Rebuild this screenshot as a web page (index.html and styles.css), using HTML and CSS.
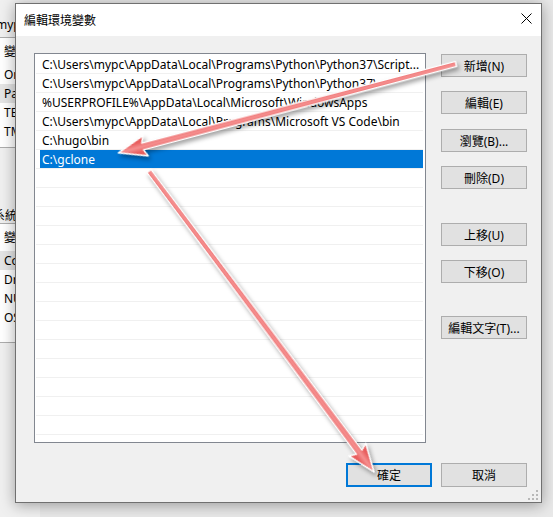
FILE: index.html
```html
<!DOCTYPE html>
<html lang="zh-Hant">
<head>
    <meta charset="UTF-8">
    <meta name="viewport" content="width=device-width, initial-scale=1.0">
    <title>編輯環境變數</title>
    <link rel="stylesheet" href="styles.css">
</head>
<body>
    <div class="desktop">
        <!-- system properties window behind the dialog -->
        <div class="behind">
            <div class="behind-title">mypc</div>
            <div class="behind-list user-vars">
                <div class="behind-head">變數</div>
                <div class="behind-row">OneDrive</div>
                <div class="behind-row sel">Path</div>
                <div class="behind-row">TEMP</div>
                <div class="behind-row">TMP</div>
            </div>
            <div class="behind-label">系統變數</div>
            <div class="behind-list sys-vars">
                <div class="behind-head">變數</div>
                <div class="behind-row sel">ComSpec</div>
                <div class="behind-row">DriverData</div>
                <div class="behind-row">NUMBER_OF_PROCESSORS</div>
                <div class="behind-row">OS</div>
            </div>
        </div>

        <div class="dialog">
            <div class="titlebar">
                <span class="title">編輯環境變數</span>
                <svg class="close" width="11" height="11" viewBox="0 0 11 11">
                    <path d="M0.5 0.5 L10.5 10.5 M10.5 0.5 L0.5 10.5" stroke="#000" stroke-width="1"/>
                </svg>
            </div>

            <div class="dialog-body">
                <div class="main">
                    <div class="pathlist">
                        <div class="row">C:\Users\mypc\AppData\Local\Programs\Python\Python37\Script...</div>
                        <div class="row">C:\Users\mypc\AppData\Local\Programs\Python\Python37\</div>
                        <div class="row">%USERPROFILE%\AppData\Local\Microsoft\WindowsApps</div>
                        <div class="row">C:\Users\mypc\AppData\Local\Programs\Microsoft VS Code\bin</div>
                        <div class="row">C:\hugo\bin</div>
                        <div class="row sel">C:\gclone</div>
                        <div class="row"></div>
                        <div class="row"></div>
                        <div class="row"></div>
                        <div class="row"></div>
                        <div class="row"></div>
                        <div class="row"></div>
                        <div class="row"></div>
                        <div class="row"></div>
                        <div class="row"></div>
                        <div class="row"></div>
                        <div class="row"></div>
                        <div class="row"></div>
                        <div class="row"></div>
                        <div class="row"></div>
                        <div class="row"></div>
                    </div>

                    <div class="side">
                        <button class="btn">新增(N)</button>
                        <button class="btn">編輯(E)</button>
                        <button class="btn spaced-1">瀏覽(B)...</button>
                        <button class="btn">刪除(D)</button>
                        <button class="btn group">上移(U)</button>
                        <button class="btn">下移(O)</button>
                        <button class="btn group-2">編輯文字(T)...</button>
                    </div>
                </div>

                <div class="footer">
                    <button class="btn wide default">確定</button>
                    <button class="btn wide">取消</button>
                </div>

                <svg class="grip" width="10" height="10" viewBox="0 0 10 10">
                    <rect x="8" y="0" width="2" height="2" fill="#b8b8b8"/>
                    <rect x="4" y="4" width="2" height="2" fill="#b8b8b8"/>
                    <rect x="8" y="4" width="2" height="2" fill="#b8b8b8"/>
                    <rect x="0" y="8" width="2" height="2" fill="#b8b8b8"/>
                    <rect x="4" y="8" width="2" height="2" fill="#b8b8b8"/>
                    <rect x="8" y="8" width="2" height="2" fill="#b8b8b8"/>
                </svg>
            </div>
        </div>

        <!-- annotation arrows drawn over the screenshot -->
        <svg class="arrows" width="553" height="517" viewBox="0 0 553 517">
            <defs>
                <linearGradient id="arrowFill" gradientUnits="userSpaceOnUse" x1="0" y1="-5" x2="0" y2="5">
                    <stop offset="0" stop-color="#e85e5e"/>
                    <stop offset="0.5" stop-color="#f59090"/>
                    <stop offset="1" stop-color="#e85e5e"/>
                </linearGradient>
            </defs>
            <g class="arrow">
                <polygon transform="translate(456 64) rotate(165.25)"
                    points="0,-2.5 324,-3.5 321,-10.5 349,0 321,10.5 324,3.5 0,2.5"
                    fill="url(#arrowFill)" stroke="#fff" stroke-width="1.5" stroke-linejoin="round"/>
                <polygon transform="translate(149 171) rotate(53.22)"
                    points="0,-2.5 351,-3.5 348,-10.5 376,0 348,10.5 351,3.5 0,2.5"
                    fill="url(#arrowFill)" stroke="#fff" stroke-width="1.5" stroke-linejoin="round"/>
            </g>
        </svg>
    </div>
</body>
</html>
```

FILE: styles.css
```css
:root {
    --face: #f0f0f0;
    --btn-bg: #e1e1e1;
    --btn-border: #adadad;
    --accent: #0078d7;
    --line: #f0f0f0;
}

* {
    box-sizing: border-box;
}

body {
    margin: 0;
    background: #e9e9e9;
    font-family: 'Noto Sans', 'Noto Sans CJK TC', sans-serif;
    font-size: 12px;
    color: #000;
}

.desktop {
    position: relative;
    width: 553px;
    height: 517px;
    overflow: hidden;
}

/* window behind */
.behind {
    position: absolute;
    left: 0;
    top: 0;
    width: 40px;
    height: 517px;
    background: var(--face);
}

.behind-title {
    height: 37px;
    line-height: 50px;
    margin-left: -4px;
    white-space: nowrap;
}

.behind-list {
    background: #fff;
    border-top: 1px solid #adadad;
    border-bottom: 1px solid #adadad;
    padding-left: 4px;
    white-space: nowrap;
}

.user-vars {
    height: 111px;
}

.sys-vars {
    height: 120px;
}

.behind-head {
    height: 27px;
    line-height: 28px;
}

.behind-row {
    height: 19px;
    line-height: 19px;
}

.behind-row.sel {
    background: #e5e5e5;
    margin-left: -4px;
    padding-left: 4px;
}

.behind-label {
    height: 75px;
    line-height: 14px;
    padding-top: 61px;
    margin-left: -7px;
    white-space: nowrap;
}

/* dialog */
.dialog {
    position: absolute;
    left: 15px;
    top: 3px;
    width: 527px;
    height: 500px;
    border: 1px solid #707070;
    background: var(--face);
    box-shadow: 0 2px 14px rgba(0, 0, 0, 0.35);
    display: flex;
    flex-direction: column;
}

.titlebar {
    height: 32px;
    background: #fff;
    display: flex;
    align-items: center;
    justify-content: space-between;
    padding: 0 9px 0 8px;
}

.title {
    font-family: 'Noto Sans CJK TC', sans-serif;
    font-size: 12px;
    margin-top: -1px;
}

.close {
    display: block;
    margin-top: -3px;
}

.dialog-body {
    position: relative;
    flex: 1;
    padding: 17px 14px 15px 18px;
}

.main {
    display: flex;
    gap: 15px;
}

.pathlist {
    width: 392px;
    height: 390px;
    border: 1px solid #828790;
    background: #fff;
    overflow: hidden;
    padding-top: 1px;
}

.row {
    height: 19px;
    line-height: 18px;
    margin: 0 2px 0 1px;
    padding: 1px 0 0 6px;
    border-bottom: 1px solid var(--line);
    white-space: nowrap;
    overflow: hidden;
}

.row.sel {
    background: linear-gradient(to right, transparent 4px, var(--accent) 4px);
    background-size: 100% 18px;
    background-repeat: no-repeat;
    color: #fff;
}

.side {
    width: 86px;
    padding-top: 1px;
}

.btn {
    display: block;
    width: 86px;
    height: 23px;
    padding: 0;
    border: 1px solid var(--btn-border);
    background: var(--btn-bg);
    font-family: 'Noto Sans', 'Noto Sans CJK TC', sans-serif;
    font-size: 12px;
    color: #000;
}

.side .btn + .btn {
    margin-top: 14px;
}

.side .btn.spaced-1 {
    margin-top: 15px;
}

.side .btn.group {
    margin-top: 34px;
}

.side .btn.group-2 {
    margin-top: 33px;
}

.footer {
    margin-top: 20px;
    display: flex;
    justify-content: flex-end;
    gap: 9px;
}

.btn.wide {
    height: 24px;
}

.btn.default {
    border: 2px solid var(--accent);
}

.grip {
    position: absolute;
    right: 3px;
    bottom: 2px;
}

.arrows {
    position: absolute;
    left: 0;
    top: 0;
    pointer-events: none;
}

.arrow {
    filter: drop-shadow(2px 3px 2px rgba(0, 0, 0, 0.35));
}
```
